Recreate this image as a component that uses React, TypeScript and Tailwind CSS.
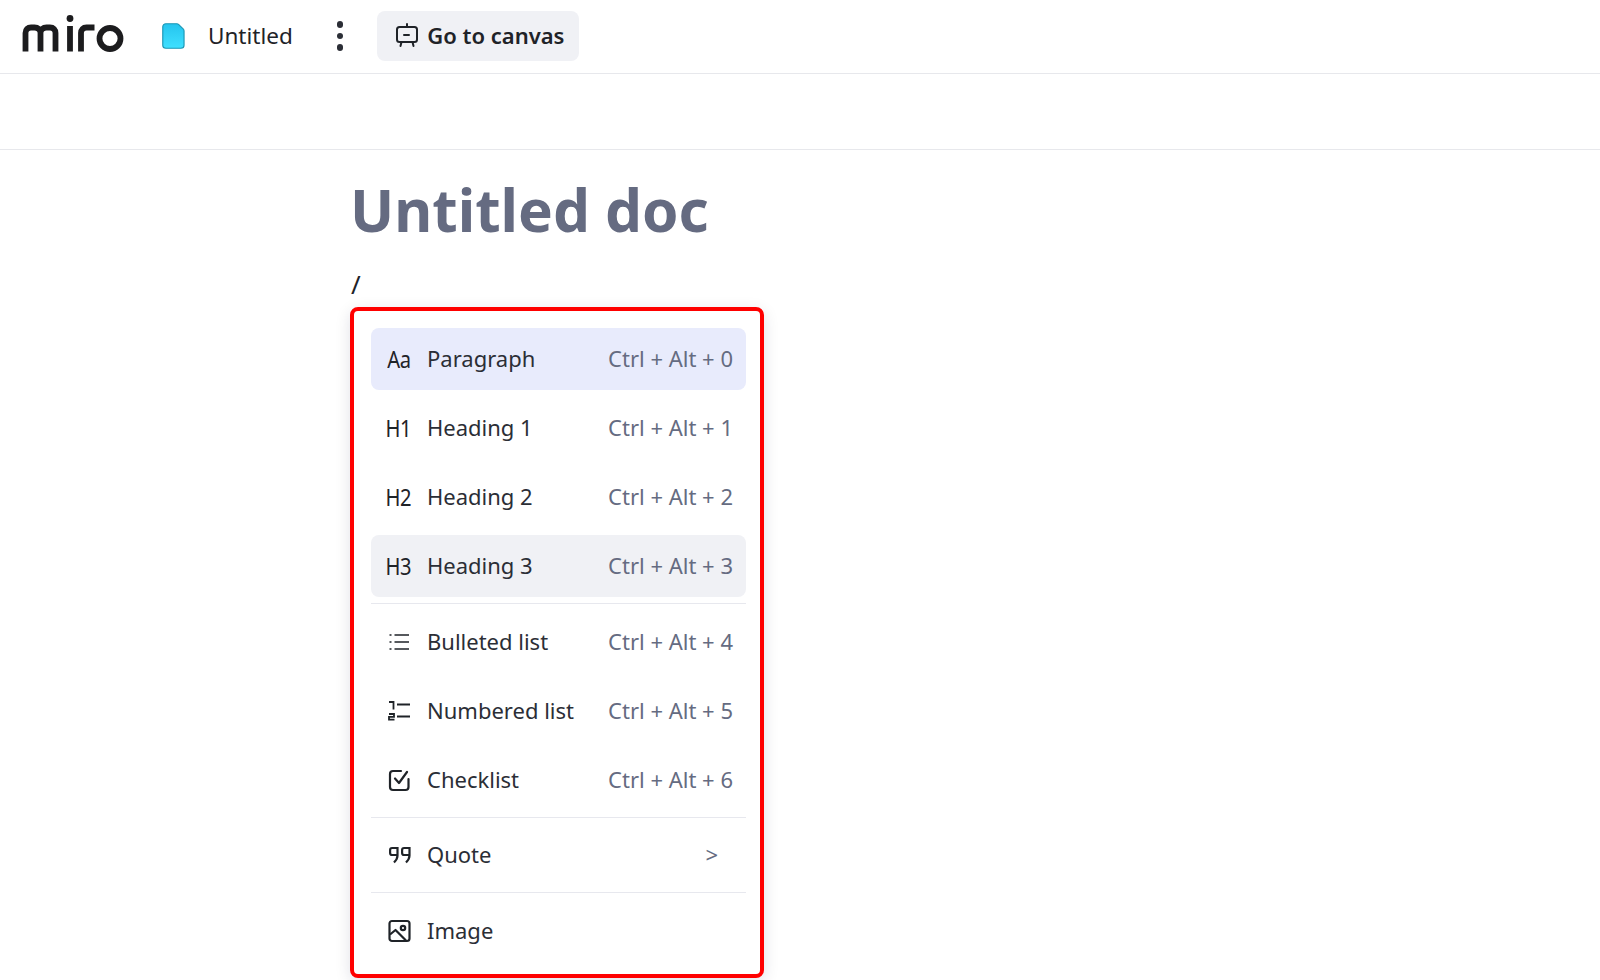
const font = { fontFamily: '"Noto Sans", sans-serif' }

function MiroLogo() {
  return (
    <svg width="102" height="37" viewBox="0 0 102 37" fill="none" stroke="#1c1c1e" strokeWidth="5.800">
      <path d="M3.500 36.500V18c0-3.500 2.300-5.500 5.500-5.500h3.500c3.500 0 6 2 6 5.500v18.500M18.500 18c0-3.500 2.500-5.500 6-5.500h3.500c3.500 0 5.500 2 5.500 5.500v18.500" />
      <circle cx="48" cy="3.500" r="3.400" fill="#1c1c1e" stroke="none" />
      <path d="M48 11v25.500M59 36.500V18c0-3.500 2-5.500 5.500-5.500h8" />
      <circle cx="88" cy="23.500" r="10.500" />
    </svg>
  )
}

function FileIcon() {
  return (
    <svg width="23" height="26" viewBox="0 0 24 28" preserveAspectRatio="none">
      <defs>
        <linearGradient id="docFill" x1="0" y1="0" x2="0" y2="1">
          <stop offset="0" stopColor="#25c4ee" />
          <stop offset="1" stopColor="#3fe0ff" />
        </linearGradient>
      </defs>
      <path d="M4 .8h11.500c.8 0 1.400.3 2 .9l4.800 5c.5.5.7 1.100.7 1.800V24c0 1.800-1.400 3.200-3.200 3.200H4c-1.800 0-3.200-1.400-3.200-3.200V4C.8 2.200 2.200.8 4 .8Z" fill="url(#docFill)" stroke="#1b97b5" strokeWidth="1.200" />
    </svg>
  )
}

function CanvasIcon() {
  return (
    <svg width="24" height="26" viewBox="0 0 24 26" fill="none" stroke="#1f2328" strokeWidth="2" strokeLinecap="round">
      <rect x="2" y="4" width="20" height="15" rx="2.500" />
      <path d="M12 1v3M9 12h5M6.500 19l-1 4M17.500 19l1 4" />
    </svg>
  )
}

function ListIcon() {
  return (
    <svg width="24" height="24" viewBox="0 0 24 24" fill="none" stroke="#1f2328" strokeWidth="1.600">
      <path d="M7.500 5h14.500M7.500 12h14.500M7.500 19h14.500M2.500 5h2M2.500 12h2M2.500 19h2" />
    </svg>
  )
}

function NumberedIcon() {
  return (
    <svg width="24" height="24" viewBox="0 0 24 24" fill="none" stroke="#1f2328" strokeWidth="1.800">
      <path d="M2 3h4.500v7.500M10 5.500h13M10 17.500h13M2 15h5v2.800h-5v2.900h5.500" />
    </svg>
  )
}

function CheckIcon() {
  return (
    <svg width="24" height="24" viewBox="0 0 24 24" fill="none" stroke="#1f2328" strokeWidth="2.200" strokeLinecap="round" strokeLinejoin="round">
      <path d="M14 3H6a3 3 0 0 0-3 3v13a3 3 0 0 0 3 3h12.500a3 3 0 0 0 3-3v-8" />
      <path d="M8 10.500l4 4.500 8-11" />
    </svg>
  )
}

function QuoteIcon() {
  return (
    <svg width="24" height="24" viewBox="0 0 24 24" fill="none" stroke="#1f2328" strokeWidth="2.200">
      <path d="M10.500 5H5.100a2 2 0 0 0-2 2v3a2 2 0 0 0 2 2h5.400M10.500 4v8.500c0 3-1.500 5-3.500 7M22.500 5H17.100a2 2 0 0 0-2 2v3a2 2 0 0 0 2 2h5.400M22.500 4v8.500c0 3-1.500 5-3.500 7" />
    </svg>
  )
}

function ImageIcon() {
  return (
    <svg width="24" height="24" viewBox="0 0 24 24" fill="none" stroke="#1f2328" strokeWidth="2.200" strokeLinejoin="round">
      <rect x="2.500" y="2" width="20" height="20" rx="2.500" />
      <circle cx="16" cy="9" r="2.200" />
      <path d="M3 15.500l5.500-4.500 10.500 10.500" />
    </svg>
  )
}

function TextIcon({ label }: { label: string }) {
  return <span className="scale-x-[0.84] text-[24px] leading-none tracking-[-0.5px] text-[#1f2328]">{label}</span>
}

type Row = { icon: React.ReactNode; label: string; hint: string; bg?: string; hintClass?: string }

const headings: Row[] = [
  { icon: <TextIcon label="Aa" />, label: 'Paragraph', hint: 'Ctrl + Alt + 0', bg: 'bg-[#e8ebfc]' },
  { icon: <TextIcon label="H1" />, label: 'Heading 1', hint: 'Ctrl + Alt + 1' },
  { icon: <TextIcon label="H2" />, label: 'Heading 2', hint: 'Ctrl + Alt + 2' },
  { icon: <TextIcon label="H3" />, label: 'Heading 3', hint: 'Ctrl + Alt + 3', bg: 'bg-[#f0f1f5]' },
]

const lists: Row[] = [
  { icon: <ListIcon />, label: 'Bulleted list', hint: 'Ctrl + Alt + 4' },
  { icon: <NumberedIcon />, label: 'Numbered list', hint: 'Ctrl + Alt + 5' },
  { icon: <CheckIcon />, label: 'Checklist', hint: 'Ctrl + Alt + 6' },
]

function MenuRow({ icon, label, hint, bg, hintClass }: Row) {
  return (
    <div className={`flex h-[62.300px] items-center rounded-lg pl-[15px] pr-[13px] ${bg ?? ''}`}>
      <div className="flex w-[25px] justify-center">{icon}</div>
      <span className="ml-[16px] pb-px text-[22px] text-[#2b2e36]">{label}</span>
      <span className={`ml-auto pb-px text-[22px] text-[#656b81] ${hintClass ?? ''}`}>{hint}</span>
    </div>
  )
}

function Divider() {
  return <div className="my-[6.100px] h-px bg-[#e7e8ee]" />
}

export default function App() {
  return (
    <div className="h-[980px] overflow-hidden bg-white" style={font}>
      <header className="flex h-[74px] items-center border-b border-[#e7e8ec] pb-[1.500px] pl-[22px]">
        <div className="mb-[4px] flex"><MiroLogo /></div>
        <div className="ml-[38px] flex"><FileIcon /></div>
        <span className="ml-[23px] text-[22.500px] text-[#1f2328]">Untitled</span>
        <div className="ml-[44px] flex flex-col gap-[5px]">
          <span className="size-[6.500px] rounded-full bg-[#2b2e36]" />
          <span className="size-[6.500px] rounded-full bg-[#2b2e36]" />
          <span className="size-[6.500px] rounded-full bg-[#2b2e36]" />
        </div>
        <button className="ml-[34px] flex h-[50px] w-[202px] items-center gap-[8px] rounded-lg bg-[#f0f1f5] pl-[18px] text-[22px] font-semibold text-[#1f2328]">
          <CanvasIcon />
          Go to canvas
        </button>
      </header>
      <div className="h-[76px] border-b border-[#e7e8ec]" />
      <main className="pl-[350px]">
        <h1 className="mt-[18px] text-[58.500px] font-bold leading-[82px] text-[#656b81]">Untitled doc</h1>
        <p className="ml-px mt-[16px] h-[36px] text-[26px] leading-[36px] text-[#1f2328]">/</p>
        <div className="mt-[5px] w-[414px] rounded-lg border-[4px] border-[#ff0000] bg-white pb-[12.400px] pl-[17px] pr-[14px] pt-[17px] shadow-[0_4px_16px_rgba(5,0,56,0.12)]">
          <div className="flex flex-col gap-[6.700px]">
            {headings.map((row) => <MenuRow key={row.label} {...row} />)}
          </div>
          <Divider />
          <div className="flex flex-col gap-[6.700px]">
            {lists.map((row) => <MenuRow key={row.label} {...row} />)}
          </div>
          <Divider />
          <MenuRow icon={<QuoteIcon />} label="Quote" hint=">" hintClass="mr-[15px]" />
          <Divider />
          <MenuRow icon={<ImageIcon />} label="Image" hint="" />
        </div>
      </main>
    </div>
  )
}
